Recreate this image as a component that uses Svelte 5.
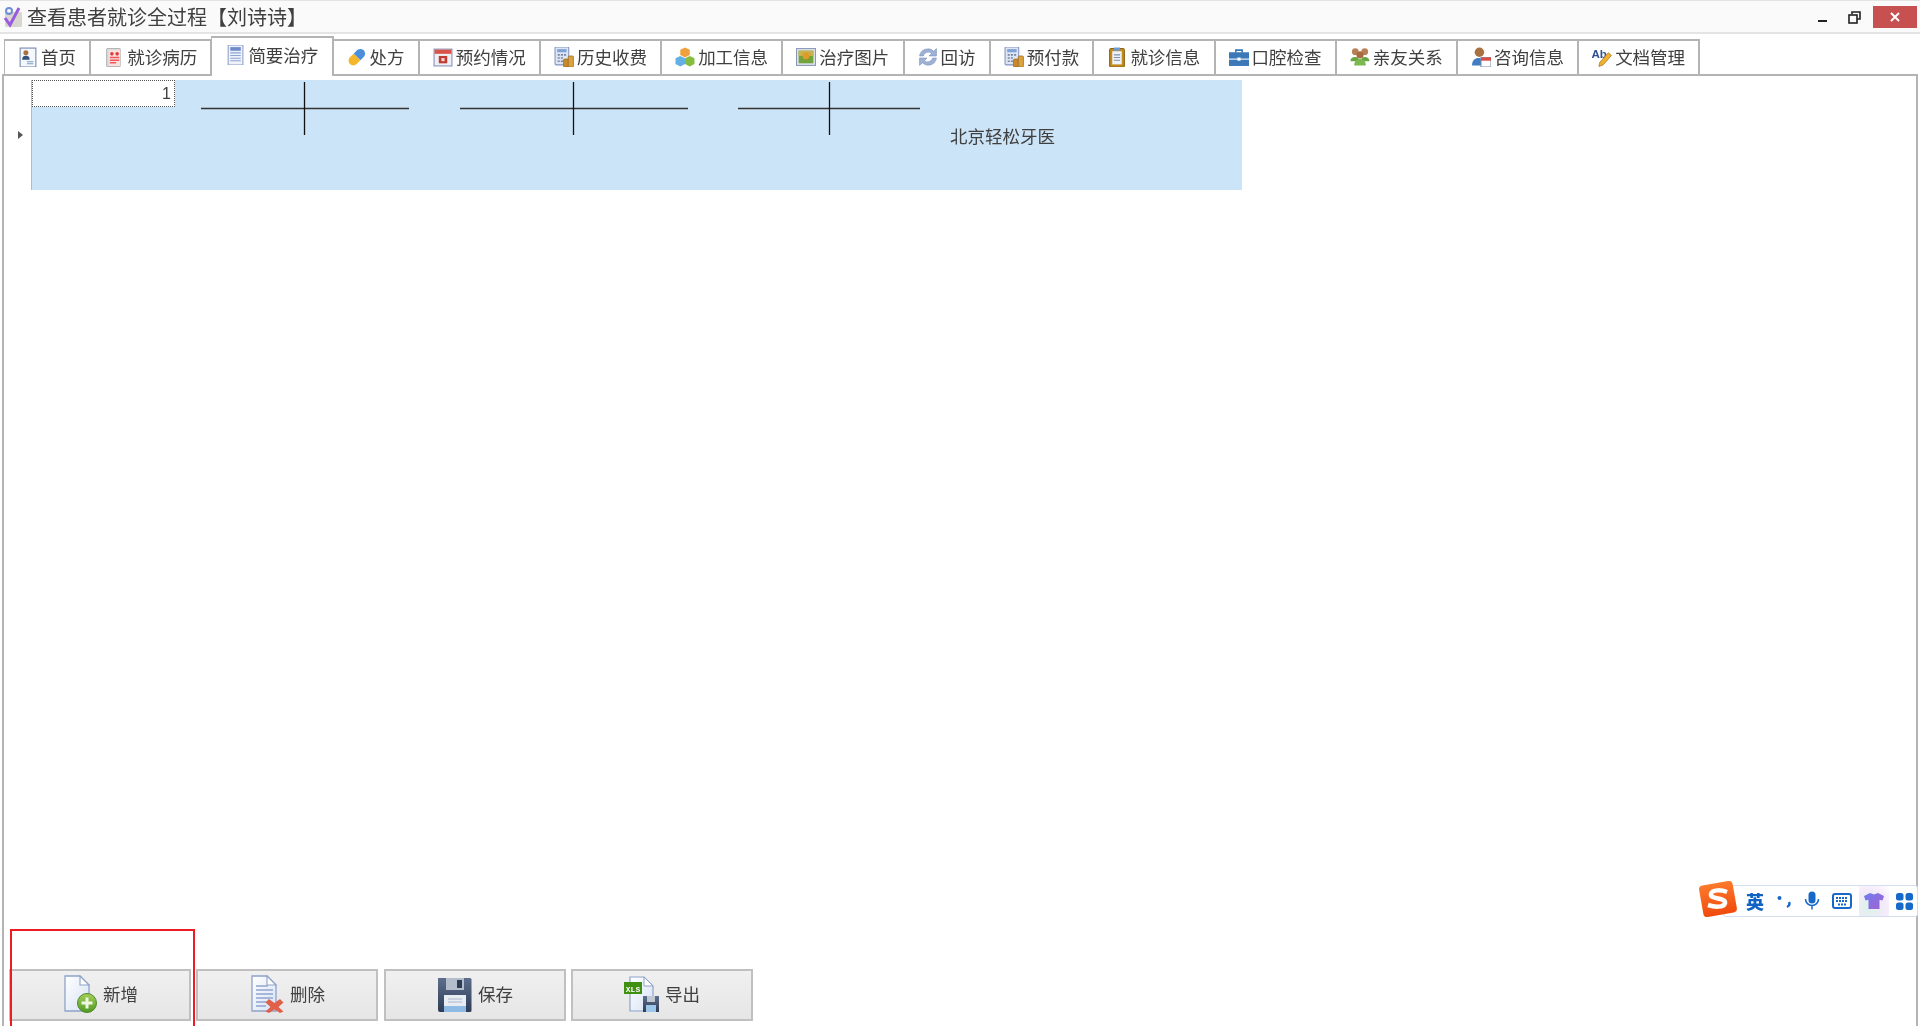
<script>
  const tabs = [
    { label: '首页', icon: 'card' },
    { label: '就诊病历', icon: 'record' },
    { label: '简要治疗', icon: 'brief', active: true },
    { label: '处方', icon: 'pill' },
    { label: '预约情况', icon: 'calendar' },
    { label: '历史收费', icon: 'calc' },
    { label: '加工信息', icon: 'cubes' },
    { label: '治疗图片', icon: 'photo' },
    { label: '回访', icon: 'refresh' },
    { label: '预付款', icon: 'calc' },
    { label: '就诊信息', icon: 'clipboard' },
    { label: '口腔检查', icon: 'case' },
    { label: '亲友关系', icon: 'people' },
    { label: '咨询信息', icon: 'consult' },
    { label: '文档管理', icon: 'abpen' }
  ];

  // tooth position crosses in the row, offset from previous cell
  const crosses = [
    { left: 26, width: 208, x: 103 },
    { left: 51, width: 228, x: 113 },
    { left: 50, width: 182, x: 91 }
  ];

  const buttons = [
    { label: '新增', icon: 'add' },
    { label: '删除', icon: 'remove' },
    { label: '保存', icon: 'save' },
    { label: '导出', icon: 'export' }
  ];
</script>

{#snippet tabIcon(name)}
  <svg class="tab-icon" viewBox="0.500 0.500 19 19" width="20" height="20">
    {#if name === 'card'}
      <rect x="2.500" y="1.500" width="15" height="18" fill="#f4f7fb" stroke="#6f86ad" />
      <circle cx="8" cy="6" r="2.400" fill="#a9713f" />
      <path d="M4.500 12.500c0-3 1.500-3.800 3.500-3.800s3.500.8 3.500 3.800z" fill="#34507f" />
      <path d="M9 14.500h6M9 16.500h6" stroke="#7f9cc4" />
    {:else if name === 'record'}
      <rect x="3" y="2" width="13" height="17" rx="1" fill="#dcdcdc" stroke="#b5b5b5" />
      <rect x="5" y="3.500" width="11" height="15" fill="#fbe0e0" />
      <circle cx="8" cy="7" r="1.700" fill="#e23b3b" />
      <circle cx="13" cy="7" r="1.700" fill="#e23b3b" />
      <path d="M6 10.500h9M6 13h9M6 15.500h6" stroke="#ee5a5a" stroke-width="1.400" />
    {:else if name === 'brief'}
      <rect x="3.500" y="0.500" width="14" height="19" fill="#eef2fa" stroke="#8c9fca" />
      <rect x="5.500" y="2.500" width="10" height="3.500" fill="#6f8cc9" />
      <path d="M5.500 8h10M5.500 10.500h10M5.500 13h10M5.500 15.500h10" stroke="#8ea4d3" />
    {:else if name === 'pill'}
      <g transform="rotate(45 10 10)">
        <path d="M5.500 10V5.500a4.500 4.500 0 0 1 9 0V10z" fill="#4b8fdc" />
        <path d="M5.500 10v5a4.500 4.500 0 0 0 9 0v-5z" fill="#f4b62a" />
      </g>
    {:else if name === 'calendar'}
      <rect x="1.500" y="2.500" width="17" height="16" fill="#eef0f6" stroke="#8692b8" />
      <rect x="2" y="3" width="16" height="4" fill="#d9534a" />
      <rect x="6" y="9" width="8" height="7" fill="#c23b33" />
      <rect x="8.500" y="11" width="3" height="3" fill="#f6d6d3" />
    {:else if name === 'calc'}
      <rect x="1.500" y="0.500" width="13" height="17" rx="1" fill="#dfe6f3" stroke="#8294bb" />
      <rect x="3.500" y="2.500" width="9" height="3" fill="#7fa3d8" />
      <path d="M4 8h2M7 8h2M10 8h2M4 11h2M7 11h2M4 14h2M7 14h2" stroke="#7a88a8" stroke-width="1.500" />
      <rect x="9.500" y="12" width="5" height="7.500" rx="1" fill="#c98a2b" stroke="#8e5c17" stroke-width="0.600" />
      <rect x="14" y="9" width="5" height="10.500" rx="1" fill="#dca23f" stroke="#8e5c17" stroke-width="0.600" />
    {:else if name === 'cubes'}
      <path d="M10 1l4.500 2.200v5L10 10.500 5.500 8.200v-5z" fill="#f0a03c" />
      <path d="M5.500 9l4.500 2.200v5.500L5.500 19 1 16.700v-5.500z" fill="#62b0e4" />
      <path d="M14.500 9l4.500 2.200v5.500L14.500 19 10 16.700v-5.500z" fill="#86bd3e" />
    {:else if name === 'photo'}
      <rect x="1" y="2" width="18" height="16" fill="#dfe4ee" stroke="#8a97b5" />
      <rect x="3" y="4" width="14" height="12" fill="#73a33a" />
      <rect x="3" y="4" width="14" height="5" fill="#c9b24d" />
      <circle cx="10" cy="9" r="3.200" fill="#e09a26" />
    {:else if name === 'refresh'}
      <path d="M2 9a8 8 0 0 1 13.500-4.500L18 2v7h-7l2.500-2.500A5 5 0 0 0 5.500 9z" fill="#9fb2d6" stroke="#7d93bf" stroke-width="0.600" />
      <path d="M18 11a8 8 0 0 1-13.500 4.500L2 18v-7h7l-2.500 2.500a5 5 0 0 0 8-2.500z" fill="#9fb2d6" stroke="#7d93bf" stroke-width="0.600" />
    {:else if name === 'clipboard'}
      <rect x="3" y="2" width="14" height="17.500" rx="1.500" fill="#c48a1e" stroke="#8d6212" />
      <rect x="5.500" y="4.500" width="9" height="12.500" fill="#eef3fa" />
      <rect x="7" y="1" width="6" height="3" fill="#6f9bd3" />
      <path d="M7 8h6M7 10.500h6M7 13h6" stroke="#7f8fa8" />
    {:else if name === 'case'}
      <path d="M7 6V3.500h6V6" fill="none" stroke="#3b78b8" stroke-width="1.500" />
      <rect x="0.500" y="5.500" width="19" height="6" fill="#3b78b8" />
      <rect x="0.500" y="12.500" width="19" height="6" fill="#3b78b8" />
      <rect x="8.500" y="10.500" width="3" height="3" fill="#fff" />
    {:else if name === 'people'}
      <circle cx="5.500" cy="5" r="3.200" fill="#b98055" />
      <circle cx="14.500" cy="5" r="3.200" fill="#b98055" />
      <circle cx="10" cy="8" r="3.400" fill="#a86c40" />
      <path d="M1 14c0-3 2-4 4.500-4S9 11 9 14zM11 14c0-3 1.500-4 3.500-4s4.500 1 4.500 4z" fill="#68a544" />
      <path d="M4.500 18c0-4 2.500-6 5.500-6s5.500 2 5.500 6z" fill="#7cb850" />
    {:else if name === 'consult'}
      <circle cx="8.500" cy="5.500" r="4.500" fill="#a9713f" />
      <path d="M1.500 18c0-5 3-7 6-7s5 1.500 5 7z" fill="#3f7dc4" />
      <rect x="10" y="10.500" width="9.500" height="9" fill="#fff" stroke="#7f8fa8" />
      <rect x="10" y="10.500" width="9.500" height="3" fill="#e04a42" />
    {:else if name === 'abpen'}
      <text x="0" y="11" class="ab">Ab</text>
      <path d="M7 19l1-4 8-9 3 2.500-8 9z" fill="#f0b232" stroke="#a8741a" stroke-width="0.700" />
    {/if}
  </svg>
{/snippet}

{#snippet sheet()}
  <path d="M3 1h15l9 9v26H3z" fill="url(#sheetFill)" stroke="#8fa3c9" stroke-width="1.300" />
  <path d="M18 1v9h9z" fill="#fff" stroke="#8fa3c9" stroke-width="1.100" />
{/snippet}

{#snippet buttonIcon(name)}
  <svg class="btn-icon" viewBox="0 0 36 38" width="36" height="38">
    <defs>
      <linearGradient id="sheetFill" x1="0" y1="0" x2="1" y2="1">
        <stop offset="0" stop-color="#ffffff" />
        <stop offset="1" stop-color="#d6e2f4" />
      </linearGradient>
      <linearGradient id="greenFill" x1="0" y1="0" x2="0" y2="1">
        <stop offset="0" stop-color="#a6d05a" />
        <stop offset="1" stop-color="#4d9a25" />
      </linearGradient>
      <linearGradient id="floppyFill" x1="0" y1="0" x2="0" y2="1">
        <stop offset="0" stop-color="#5d6f8d" />
        <stop offset="1" stop-color="#2e3c55" />
      </linearGradient>
    </defs>
    {#if name === 'add'}
      {@render sheet()}
      <circle cx="25" cy="28" r="9.500" fill="url(#greenFill)" stroke="#4c8a26" />
      <path d="M25 22.500v11M19.500 28h11" stroke="#eef7df" stroke-width="3" />
    {:else if name === 'remove'}
      {@render sheet()}
      <path d="M7 11h12M7 15h17M7 19h17M7 23h17M7 27h13M7 31h10" stroke="#90a5cf" stroke-width="1.400" />
      <path d="M20 24l5.500 4 5.500-4 3.500 3.500-5 4.500 5 4.500-3.500 1.500-5.500-3.500-5.500 3.500-3.500-1.500 5-4.500-5-4.500z" fill="#e0604a" />
    {:else if name === 'save'}
      <path d="M1 3h32a1.500 1.500 0 0 1 1.500 1.500v31a1.500 1.500 0 0 1-1.500 1.500H3a2 2 0 0 1-2-2z" fill="url(#floppyFill)" />
      <rect x="9" y="3" width="18" height="12" fill="#b3bdcc" />
      <rect x="20" y="5" width="5" height="8" fill="#2e3c55" />
      <rect x="7" y="20" width="22" height="17" fill="#e8edf4" />
      <rect x="7" y="31" width="22" height="6" fill="#8dbbe4" />
      <path d="M11 24h14M11 27h14" stroke="#a9b6c8" />
    {:else if name === 'export'}
      <path d="M6 2h14l9 9v25H6z" fill="url(#sheetFill)" stroke="#8fa3c9" stroke-width="1.200" />
      <path d="M20 2v9h9z" fill="#fff" stroke="#8fa3c9" />
      <rect x="0" y="7" width="18" height="12" fill="#3f8f10" />
      <text x="9" y="16.500" class="xls">XLS</text>
      <path d="M19 21h16v16H19z" fill="url(#floppyFill)" />
      <rect x="23" y="21" width="8" height="6" fill="#c0c8d4" />
      <rect x="22" y="30" width="10" height="7" fill="#9cc6ea" />
    {/if}
  </svg>
{/snippet}

<div class="window">
  <header class="titlebar">
    <svg class="app-icon" viewBox="0 0 20 22" width="20" height="22">
      <rect x="2" y="6" width="17" height="15" rx="1.500" fill="#d9d6d0" />
      <circle cx="6" cy="5" r="3" fill="none" stroke="#6f90d8" stroke-width="2" />
      <path d="M2 12l5 7 9-17" fill="none" stroke="#9a5ae0" stroke-width="3" />
    </svg>
    <span class="title">查看患者就诊全过程【刘诗诗】</span>
    <div class="win-controls">
      <span class="win-min"></span>
      <svg class="win-restore" viewBox="0 0 13 13" width="13" height="13">
        <path d="M4 3V1h8v7h-3" fill="none" stroke="#222" stroke-width="1.600" />
        <rect x="1" y="4" width="8" height="8" fill="none" stroke="#222" stroke-width="1.600" />
      </svg>
      <button class="win-close">
        <svg viewBox="0 0 10 10" width="10" height="10"><path d="M1 1l8 8M9 1l-8 8" stroke="#fff" stroke-width="2" /></svg>
      </button>
    </div>
  </header>

  <nav class="tabs">
    {#each tabs as tab}
      <div class="tab" class:active={tab.active}>
        {@render tabIcon(tab.icon)}
        <span>{tab.label}</span>
      </div>
    {/each}
  </nav>

  <main class="content">
    <div class="grid">
      <div class="row-marker"></div>
      <div class="row">
        <div class="cell-no">1</div>
        {#each crosses as c}
          <svg class="cross" width={c.width} height="53" style="margin-left:{c.left}px">
            <line x1="0" y1="26.500" x2={c.width} y2="26.500" stroke="#333" stroke-width="1.300" />
            <line x1={c.x + 0.5} y1="0" x2={c.x + 0.5} y2="53" stroke="#111" stroke-width="1.300" />
          </svg>
        {/each}
        <span class="clinic">北京轻松牙医</span>
      </div>
    </div>

    <div class="actions">
      {#each buttons as b}
        <button class="action">
          {@render buttonIcon(b.icon)}
          <span>{b.label}</span>
        </button>
      {/each}
    </div>
  </main>

  <div class="highlight"></div>

  <div class="ime">
    <svg class="ime-logo" viewBox="0 0 42 40" width="42" height="40">
      <defs><linearGradient id="logoFill" x1="0" y1="0" x2="0" y2="1"><stop offset="0" stop-color="#fb7a2c" /><stop offset="1" stop-color="#f04a0c" /></linearGradient></defs>
      <rect x="4" y="4" width="34" height="32" rx="4" fill="url(#logoFill)" transform="rotate(-10 21 20)" />
      <path d="M30 13c-5-2-15-3-16 2-1 6 15 3 14 9-1 5-11 4-17 2" fill="none" stroke="#fff" stroke-width="4.500" />
    </svg>
    <div class="ime-bar">
      <span class="ime-lang">英</span>
      <svg viewBox="0 0 16 16" width="16" height="16"><circle cx="3.500" cy="5" r="2" fill="#1668c9" /><path d="M13 9c1 2 0 4-2 5" fill="none" stroke="#1668c9" stroke-width="2.400" /></svg>
      <svg viewBox="0 0 16 20" width="16" height="20"><rect x="4.500" y="0.500" width="7" height="12" rx="3.500" fill="#1668c9" /><path d="M1.500 8a6.500 6.500 0 0 0 13 0M8 14.500v4" fill="none" stroke="#1668c9" stroke-width="1.500" /></svg>
      <svg viewBox="0 0 20 16" width="20" height="16"><rect x="1" y="1" width="18" height="14" rx="2" fill="none" stroke="#1668c9" stroke-width="2" /><path d="M4 5h12M4 8h12M6 11.500h8" stroke="#1668c9" stroke-width="2" stroke-dasharray="2 1" /></svg>
      <span class="ime-skin">
        <svg viewBox="0 0 20 18" width="20" height="18">
          <defs><linearGradient id="shirtFill" x1="0" y1="0" x2="1" y2="1"><stop offset="0" stop-color="#6f7df0" /><stop offset="1" stop-color="#a45fd0" /></linearGradient></defs>
          <path d="M6 1l4 1.500L14 1l6 3-1.500 4.500-3-.8V17h-11V7.700l-3 .8L0 4z" fill="url(#shirtFill)" />
        </svg>
      </span>
      <svg viewBox="0 0 17 17" width="17" height="17"><rect x="0" y="0" width="7.500" height="7.500" rx="2.500" fill="#1668c9" /><rect x="9.500" y="0" width="7.500" height="7.500" rx="2.500" fill="#1668c9" /><rect x="0" y="9.500" width="7.500" height="7.500" rx="2.500" fill="#1668c9" /><rect x="9.500" y="9.500" width="7.500" height="7.500" rx="2.500" fill="#1668c9" /></svg>
    </div>
  </div>
</div>

<style>
  :global(body) {
    background: #fff;
  }

  .window {
    position: relative;
    width: 1920px;
    height: 1026px;
    display: flex;
    flex-direction: column;
    overflow: hidden;
    background: #fff;
    color: #404040;
    font-family: "Noto Sans CJK SC", "Liberation Sans", sans-serif;
    filter: blur(0.4px);
  }

  .titlebar {
    height: 34px;
    box-sizing: border-box;
    flex: none;
    display: flex;
    align-items: center;
    padding-left: 3px;
    background: #fafafa;
    border-top: 1px solid #e4e4e4;
    border-bottom: 2px solid #e4e4e4;
  }

  .app-icon {
    margin-right: 4px;
  }

  .title {
    font-size: 20px;
    line-height: 1;
  }

  .win-controls {
    margin-left: auto;
    align-self: flex-start;
    display: flex;
    align-items: center;
    margin-top: 5px;
    margin-right: 3px;
  }

  .win-min {
    width: 9px;
    height: 2px;
    margin-top: 8px;
    background: #222;
  }

  .win-restore {
    margin-left: 21px;
    margin-right: 12px;
  }

  .win-close {
    width: 44px;
    height: 22px;
    padding: 0;
    border: none;
    background: #c75050;
    display: flex;
    align-items: center;
    justify-content: center;
  }

  .tabs {
    height: 40px;
    box-sizing: border-box;
    flex: none;
    display: flex;
    align-items: flex-end;
    padding-left: 4px;
  }

  .tab {
    position: relative;
    height: 35px;
    box-sizing: border-box;
    flex: none;
    display: flex;
    align-items: center;
    gap: 3px;
    padding: 0 13.2px 2px 13px;
    margin-right: -1px;
    border: 2px solid #b4b4b4;
    border-bottom: none;
    border-left-width: 1px;
    background: #fff;
    font-size: 17.5px;
    line-height: 1;
    white-space: nowrap;
  }

  .tab.active {
    height: 40px;
    margin-bottom: -2px;
    padding-top: 1px;
    padding-bottom: 6px;
    z-index: 1;
    border-top-width: 2px;
  }

  .tab-icon {
    flex: none;
  }

  .ab {
    font: bold 11px "Liberation Sans", sans-serif;
    fill: #2f4f94;
  }

  .content {
    flex: 1;
    min-height: 0;
    display: flex;
    flex-direction: column;
    justify-content: space-between;
    margin: 0 2px 0 2px;
    border: 2px solid #b4b4b4;
    border-bottom: none;
  }

  .grid {
    display: flex;
    padding-top: 4px;
  }

  .row-marker {
    width: 27px;
    display: flex;
    align-items: center;
    justify-content: center;
  }

  .row-marker::before {
    content: "";
    margin-left: 5px;
    border-left: 5px solid #555;
    border-top: 4px solid transparent;
    border-bottom: 4px solid transparent;
  }

  .row {
    width: 1211px;
    height: 110px;
    box-sizing: border-box;
    display: flex;
    align-items: flex-start;
    background: #cce4f7;
    border-left: 1px solid #b0bcc6;
  }

  .cell-no {
    width: 143px;
    height: 27px;
    box-sizing: border-box;
    flex: none;
    padding-right: 3px;
    border: 1px dotted #555;
    background: #fff;
    text-align: right;
    font-size: 16px;
    line-height: 25px;
    font-family: "Liberation Sans", sans-serif;
  }

  .cross {
    flex: none;
    margin-top: 2px;
  }

  .clinic {
    margin-left: 30px;
    margin-top: 44px;
    font-size: 17.5px;
    line-height: 24px;
    white-space: nowrap;
  }

  .actions {
    display: flex;
    gap: 5px;
    padding: 0 0 5px 5px;
  }

  .action {
    width: 182px;
    height: 52px;
    box-sizing: border-box;
    display: flex;
    align-items: center;
    justify-content: center;
    gap: 5px;
    padding: 0 0 2px;
    border: 2px solid #c0c0c0;
    background: linear-gradient(#f0f0f0, #e6e6e6);
    color: #404040;
    font: 17.5px "Noto Sans CJK SC", sans-serif;
  }

  .action:nth-child(2) {
    margin-right: 1px;
  }

  .action span {
    margin-bottom: 1px;
  }

  .btn-icon {
    flex: none;
  }

  .xls {
    font: bold 8px "Liberation Mono", monospace;
    fill: #fff;
    text-anchor: middle;
  }

  /* annotation drawn over the screenshot */
  .highlight {
    position: absolute;
    left: 10px;
    top: 929px;
    width: 185px;
    height: 110px;
    box-sizing: border-box;
    border: 2px solid #ed1c24;
  }

  /* floating input method bar */
  .ime {
    position: absolute;
    right: 2px;
    top: 879px;
    display: flex;
    align-items: center;
  }

  .ime-logo {
    margin-right: -16px;
    z-index: 1;
  }

  .ime-bar {
    width: 195px;
    height: 32px;
    box-sizing: border-box;
    display: flex;
    align-items: center;
    justify-content: space-between;
    padding: 0 4px 0 22px;
    margin-top: 4px;
    background: #fff;
    border: 1px solid #d3deee;
    border-radius: 3px;
  }

  .ime-lang {
    font-size: 18px;
    font-weight: 900;
    color: #1262c4;
  }

  .ime-skin {
    display: flex;
    align-items: center;
    justify-content: center;
    width: 30px;
    height: 30px;
    margin: 0 -5px;
    background: radial-gradient(circle at 35% 70%, #d9f3ea 0, #f5eafa 60%, #fff 100%);
  }
</style>
